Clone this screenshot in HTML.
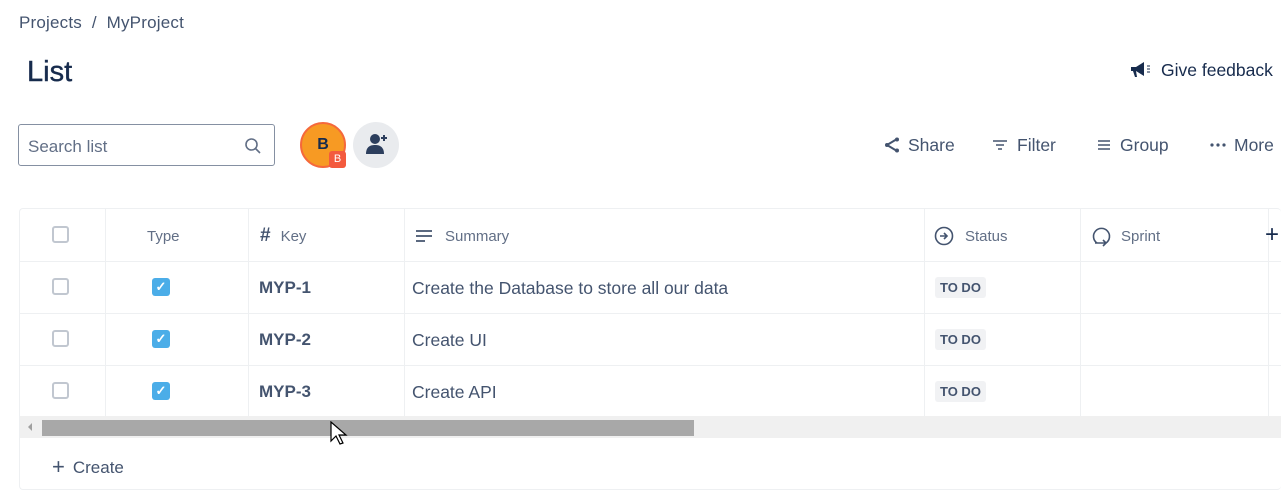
<!DOCTYPE html>
<html><head><meta charset="utf-8"><style>
*{box-sizing:border-box;margin:0;padding:0}
body{width:1281px;height:490px;overflow:hidden;background:#fff;font-family:"Liberation Sans",sans-serif;color:#172b4d;position:relative}
.a{position:absolute}
.crumb{left:19px;top:13px;font-size:17px;color:#44546f;letter-spacing:0.2px}
h1{position:absolute;left:27px;top:56px;font-size:29px;font-weight:normal;color:#172b4d;-webkit-text-stroke:0.4px #172b4d}
.search{left:18px;top:124px;width:257px;height:42px;border:1px solid #8590a2;border-radius:3px;font-size:17px;color:#626f86;padding:12px 9px}
.btn{font-size:17.5px;color:#44546f;top:134px;display:flex;align-items:center;height:22px}
.tbl{left:19px;top:208px;width:1262px;height:282px;border:1px solid #eef0f2;border-right:none;border-radius:4px}
.hl{position:absolute;left:19px;width:1262px;height:1px;background:#eef0f2}
.vl{position:absolute;top:208px;height:208px;width:1px;background:#eef0f2}
.th{font-size:15px;color:#626f86;top:224px;height:24px;display:flex;align-items:center}
.cb{width:17px;height:17px;border:2px solid #c1c7d0;border-radius:3px;left:52px}
.ty{width:18px;height:18px;background:#4bade8;border-radius:3px;left:152px;color:#fff;font-size:13px;text-align:center;line-height:18px;font-weight:bold}
.key{left:259px;font-size:17px;color:#44546f;font-weight:bold}
.sum{left:412px;font-size:17.5px;color:#44546f}
.td{left:935px;background:#f1f2f4;color:#44546f;font-size:13px;font-weight:bold;padding:3px 5px;border-radius:3px}
</style></head><body>
<div class="a crumb">Projects &nbsp;/&nbsp; MyProject</div>
<h1>List</h1>
<div class="a" style="left:1130px;top:60px;font-size:17.5px;color:#172b4d;white-space:nowrap">
<svg width="24" height="18" viewBox="0 0 24 18" style="vertical-align:-3px;margin-right:7px"><path d="M1 6h5l8-5v14l-8-5H1z" fill="#172b4d"/><path d="M3 10l2 6h2l-1-6" fill="#172b4d"/><path d="M17 5h3M17 8h3M17 11h3" stroke="#172b4d" stroke-width="1"/></svg>Give feedback</div>
<div class="a search">Search list
<svg class="a" style="right:12px;top:12px" width="18" height="18" viewBox="0 0 18 18"><circle cx="7.5" cy="7.5" r="5.5" fill="none" stroke="#626f86" stroke-width="1.6"/><path d="M11.5 11.5l4.5 4.5" stroke="#626f86" stroke-width="1.6"/></svg></div>
<div class="a" style="left:300px;top:122px;width:46px;height:46px;border-radius:50%;background:#f79a23;border:2px solid #f5683b;text-align:center;line-height:42px;font-weight:bold;font-size:16px;color:#172b4d">B</div>
<div class="a" style="left:329px;top:151px;width:17px;height:17px;background:#f35a3e;border-radius:3px;color:#fff;font-size:11px;text-align:center;line-height:17px">B</div>
<div class="a" style="left:353px;top:122px;width:46px;height:46px;border-radius:50%;background:#e9ebee">
<svg class="a" style="left:12px;top:10px" width="24" height="24" viewBox="0 0 24 24"><circle cx="10" cy="7" r="5" fill="#2c3e5d"/><path d="M1 22c0-7 4-9 9-9s9 2 9 9z" fill="#2c3e5d"/><path d="M19 3v6M16 6h6" stroke="#2c3e5d" stroke-width="2"/></svg></div>
<div class="a btn" style="left:884px"><svg width="16" height="16" viewBox="0 0 16 16" style="margin-right:8px"><path d="M13 2L3 8l10 6" fill="none" stroke="#44546f" stroke-width="2"/><circle cx="13" cy="2.5" r="2" fill="#44546f"/><circle cx="3" cy="8" r="2" fill="#44546f"/><circle cx="13" cy="13.5" r="2" fill="#44546f"/></svg>Share</div>
<div class="a btn" style="left:992px"><svg width="16" height="14" viewBox="0 0 16 14" style="margin-right:9px"><path d="M1 3h14M4 7h8M6 11h4" stroke="#44546f" stroke-width="1.6"/></svg>Filter</div>
<div class="a btn" style="left:1098px"><svg width="12" height="12" viewBox="0 0 12 12" style="margin-right:10px"><path d="M0 2h12M0 6h12M0 10h12" stroke="#44546f" stroke-width="1.6"/></svg>Group</div>
<div class="a btn" style="left:1210px"><svg width="16" height="4" viewBox="0 0 16 4" style="margin-right:8px"><circle cx="2" cy="2" r="1.6" fill="#44546f"/><circle cx="8" cy="2" r="1.6" fill="#44546f"/><circle cx="14" cy="2" r="1.6" fill="#44546f"/></svg>More</div>

<div class="a tbl"></div>
<div class="hl" style="top:261px"></div><div class="hl" style="top:313px"></div><div class="hl" style="top:365px"></div>
<div class="vl" style="left:105px"></div><div class="vl" style="left:248px"></div><div class="vl" style="left:404px"></div><div class="vl" style="left:924px"></div><div class="vl" style="left:1080px"></div><div class="vl" style="left:1268px"></div>
<div class="a cb" style="top:226px"></div>
<div class="a th" style="left:147px">Type</div>
<div class="a th" style="left:260px"><b style="font-size:19px;color:#44546f;margin-right:10px">#</b>Key</div>
<div class="a th" style="left:416px"><svg width="16" height="12" viewBox="0 0 16 12" style="margin-right:13px"><path d="M0 1h16M0 6h16M0 11h9" stroke="#44546f" stroke-width="1.8"/></svg>Summary</div>
<div class="a th" style="left:934px"><svg width="20" height="20" viewBox="0 0 20 20" style="margin-right:11px"><circle cx="10" cy="10" r="8.5" fill="none" stroke="#44546f" stroke-width="1.6"/><path d="M6 10h7M10 7l3 3-3 3" fill="none" stroke="#44546f" stroke-width="1.6"/></svg>Status</div>
<div class="a th" style="left:1090px"><svg width="22" height="22" viewBox="0 0 22 22" style="margin-right:9px"><path d="M7 18a8 8 0 1 1 9 0" fill="none" stroke="#44546f" stroke-width="1.6"/><path d="M5 18h11M13 15l3 3-3 3" fill="none" stroke="#44546f" stroke-width="1.6"/></svg>Sprint</div>
<div class="a" style="left:1265px;top:221px;font-size:24px;color:#172b4d">+</div>

<div class="a cb" style="top:278px"></div><div class="a ty" style="top:278px">✓</div><div class="a key" style="top:278px">MYP-1</div><div class="a sum" style="top:278px">Create the Database to store all our data</div><div class="a td" style="top:277px">TO DO</div>
<div class="a cb" style="top:330px"></div><div class="a ty" style="top:330px">✓</div><div class="a key" style="top:330px">MYP-2</div><div class="a sum" style="top:330px">Create UI</div><div class="a td" style="top:329px">TO DO</div>
<div class="a cb" style="top:382px"></div><div class="a ty" style="top:382px">✓</div><div class="a key" style="top:382px">MYP-3</div><div class="a sum" style="top:382px">Create API</div><div class="a td" style="top:381px">TO DO</div>

<div class="a" style="left:20px;top:416px;width:1261px;height:22px;background:#f0f0f0"></div>
<div class="a" style="left:28px;top:423px;width:0;height:0;border-top:4px solid transparent;border-bottom:4px solid transparent;border-right:4px solid #a0a0a0"></div>
<div class="a" style="left:42px;top:420px;width:652px;height:16px;background:#a8a8a8"></div>
<svg class="a" style="left:330px;top:421px" width="18" height="26" viewBox="0 0 18 26"><path d="M1 1v19l5-5 4 8 3-1-4-8h7z" fill="#fff" stroke="#000" stroke-width="1.2"/></svg>
<div class="a" style="left:52px;top:454px;font-size:17px;color:#44546f"><span style="font-size:22px;margin-right:8px;vertical-align:-1px">+</span>Create</div>
</body></html>
